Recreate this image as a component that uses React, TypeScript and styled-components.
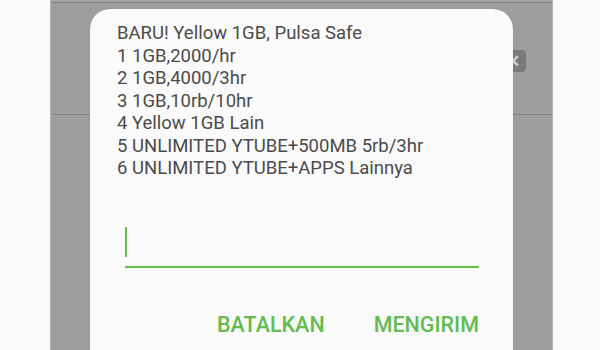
import styled, { createGlobalStyle } from "styled-components";

const GlobalStyle = createGlobalStyle`
  html, body {
    margin: 0;
    padding: 0;
    background: #f9fafc;
    font-family: Roboto, "Liberation Sans", sans-serif;
  }
`;

const Page = styled.div`
  width: 600px;
  height: 350px;
  overflow: hidden;
  background: #f9fafc;
`;

const Screen = styled.div`
  position: relative;
  margin-left: 50px;
  width: 503px;
  height: 350px;
  background: #9e9e9e;
  border-left: 1px solid #b4b4b4;
  border-right: 1px solid #b4b4b4;
  box-sizing: border-box;
  display: flex;
  flex-direction: column;
`;

const TopBar = styled.div`
  height: 2px;
  background: #a3a3a3;
  border-bottom: 1px solid #7f7f7f;
`;

const KeyRow = styled.div`
  height: 112px;
  display: flex;
  justify-content: flex-end;
  align-items: flex-start;
  padding: 47px 26px 0 0;
  box-sizing: border-box;
  border-bottom: 1px solid #868686;
`;

const KeyBadge = styled.div`
  width: 26px;
  height: 22px;
  border-radius: 4px;
  background: #7a7a7a;
  color: #d2d2d2;
  font-size: 17px;
  font-weight: 700;
  line-height: 22px;
  text-align: center;
`;

const Dialog = styled.div`
  position: absolute;
  left: 39px;
  top: 9px;
  width: 423px;
  height: 380px;
  background: #fafafa;
  border-radius: 20px;
  padding: 13px 28px 0 27px;
  box-sizing: border-box;
  box-shadow: 0 0 1px rgba(0, 0, 0, 0.3);
`;

const Message = styled.div`
  color: #4b4b4b;
  font-size: 18.5px;
  line-height: 22.5px;
`;

const Line = styled.div`
  white-space: nowrap;
`;

const Field = styled.div`
  margin: 47px 6px 0 8px;
  height: 39px;
  border-bottom: 2px solid #5fc04b;
  display: flex;
  align-items: flex-start;
`;

const Caret = styled.div`
  width: 2px;
  height: 30px;
  background: #5fc04b;
`;

const Actions = styled.div`
  display: flex;
  justify-content: flex-end;
  gap: 49px;
  margin: 44px 6px 0 0;
`;

const ActionButton = styled.button`
  border: none;
  background: none;
  padding: 0;
  font-family: Roboto, "Liberation Sans", sans-serif;
  font-weight: 500;
  font-size: 21.5px;
  color: #62bc4f;
`;

const lines = [
  "BARU! Yellow 1GB, Pulsa Safe",
  "1 1GB,2000/hr",
  "2 1GB,4000/3hr",
  "3 1GB,10rb/10hr",
  "4 Yellow 1GB Lain",
  "5 UNLIMITED YTUBE+500MB 5rb/3hr",
  "6 UNLIMITED YTUBE+APPS Lainnya",
];

export default function App() {
  return (
    <Page>
      <GlobalStyle />
      <Screen>
        <TopBar />
        <KeyRow>
          <KeyBadge>✕</KeyBadge>
        </KeyRow>
        <Dialog>
          <Message>
            {lines.map((l) => (
              <Line key={l}>{l}</Line>
            ))}
          </Message>
          <Field>
            <Caret />
          </Field>
          <Actions>
            <ActionButton>BATALKAN</ActionButton>
            <ActionButton>MENGIRIM</ActionButton>
          </Actions>
        </Dialog>
      </Screen>
    </Page>
  );
}
